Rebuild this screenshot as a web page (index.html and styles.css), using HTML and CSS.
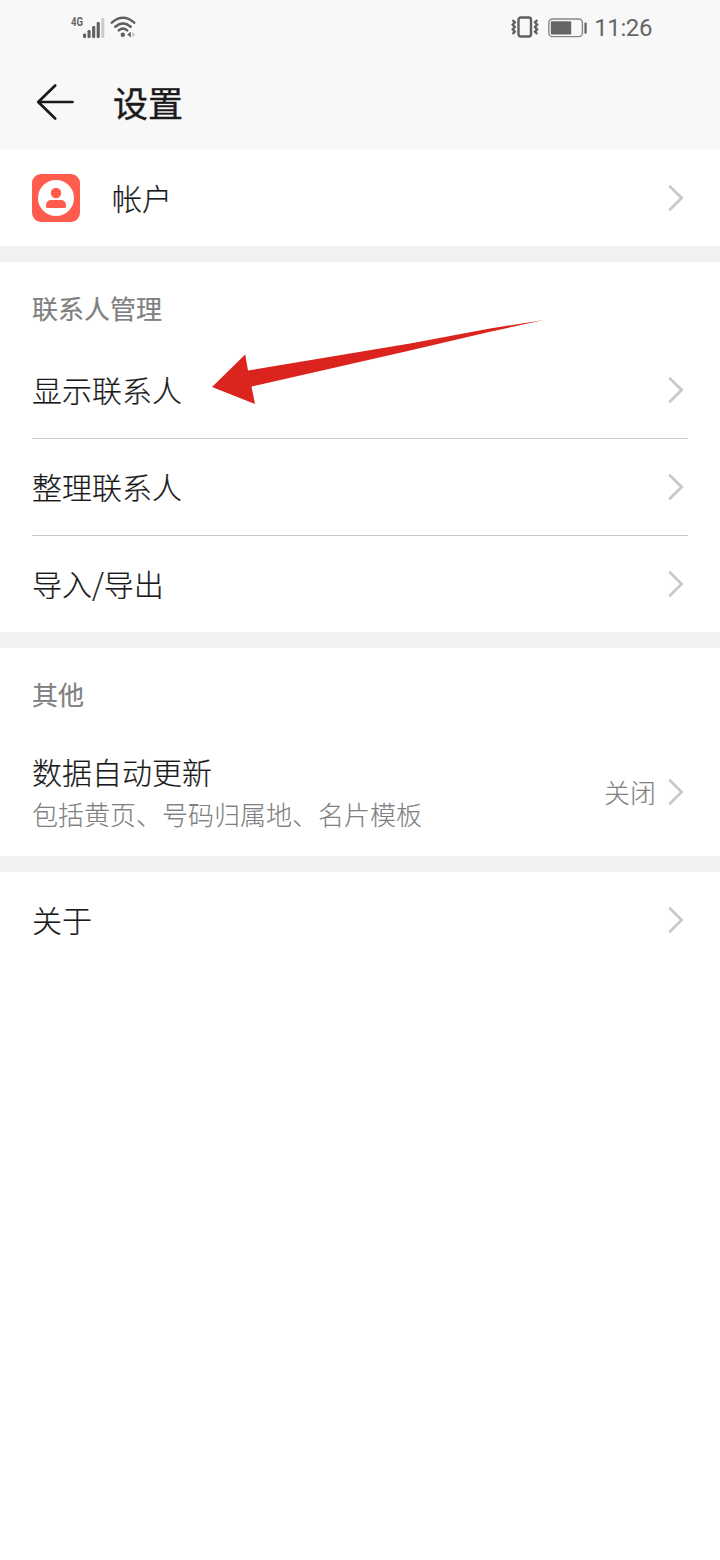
FILE: index.html
```html
<!DOCTYPE html>
<html lang="zh-CN">
<head>
<meta charset="utf-8">
<title>设置</title>
<link rel="stylesheet" href="styles.css">
</head>
<body>
<svg class="defs" width="0" height="0"><symbol id="chevron" viewBox="0 0 16 28"><path d="M2 2.5 13.7 14 2 25.5" fill="none" stroke="#c8c8c8" stroke-width="2.7" stroke-linecap="round"/></symbol></svg>
<header class="top">
  <div class="status">
    <div class="status-left">
      <span class="network">4G</span>
      <svg class="signal" width="22" height="22" viewBox="0 0 22 22"><g fill="#606060"><rect y="16.500" width="3.100" height="4.500" rx="1.2"/><rect x="4.5" y="13" width="3.100" height="8" rx="1.2"/><rect x="9.1" y="9" width="3.100" height="12" rx="1.2"/><rect x="13.7" y="5" width="3.100" height="16" rx="1.2"/></g><rect x="18.3" y="1" width="3" height="20" rx="1.2" fill="#ccc"/></svg>
      <svg class="wifi" width="26" height="22" viewBox="0 0 26 22"><g fill="none" stroke="#606060" stroke-width="2.5" stroke-linecap="round"><path d="M1.8 6.6Q13-3 24.2 6.6"/><path d="M5.3 10.7Q13 4 20.7 10.7"/><path d="M8.8 14.4Q13 10.8 17.2 14.4"/></g><circle cx="12.8" cy="18.7" r="2.2" fill="#606060"/><path d="M20.8 15.800v5.600l-3.600-2.800z" fill="#606060"/><path d="M22.200 15.800v5.600l3.200-2.800z" fill="#ccc"/></svg>
    </div>
    <div class="status-right">
      <svg class="vibrate" width="28" height="22" viewBox="0 0 28 22"><rect x="7.5" y="1.5" width="12.5" height="19" rx="2.2" fill="none" stroke="#606060" stroke-width="2.4"/><g fill="none" stroke="#606060" stroke-width="2.4"><path d="M1.5 4 3.8 6.3 1.7 8.7 3.8 11 1.7 13.4 3.8 15.8 1.5 18"/><path d="M26.3 4 24 6.3 26.1 8.7 24 11 26.1 13.4 24 15.8 26.3 18"/></g></svg>
      <svg class="battery" width="40" height="20" viewBox="0 0 40 20"><rect x=".8" y="1" width="33.6" height="17.6" rx="3.6" fill="none" stroke="#888" stroke-width="1.4"/><rect x="2.8" y="3.2" width="20.4" height="13.2" rx="1" fill="#666"/><rect x="36.4" y="4.4" width="2.3" height="11.4" rx="1" fill="#666"/></svg>
      <span class="clock">11:26</span>
    </div>
  </div>
  <div class="toolbar">
    <svg class="back" width="40" height="40" viewBox="0 0 40 40"><path d="M20.2 3.5 3.2 20 20.2 36.5M3.2 20H37.5" fill="none" stroke="#1a1a1a" stroke-width="2.7" stroke-linecap="round" stroke-linejoin="round"/></svg>
    <h1 class="title">设置</h1>
  </div>
</header>
<main>
  <section class="group">
    <div class="row">
      <svg class="avatar" width="48" height="48" viewBox="0 0 48 48"><rect width="48" height="48" rx="9" fill="#ff5c4d"/><circle cx="24" cy="24" r="18" fill="#fff"/><circle cx="24" cy="19" r="5.2" fill="#ff5c4d"/><path d="M14 32.500v-1.500a5 5 0 0 1 5-5h10a5 5 0 0 1 5 5v1.500a1.500 1.500 0 0 1-1.500 1.500h-17a1.500 1.500 0 0 1-1.500-1.500z" fill="#ff5c4d"/></svg>
      <span class="label">帐户</span><svg class="chevron"><use href="#chevron"/></svg>
    </div>
  </section>
  <section class="group">
    <h2 class="heading">联系人管理</h2>
    <div class="row with-pointer"><span class="label">显示联系人</span><svg class="chevron"><use href="#chevron"/></svg>
      <svg class="pointer" width="336" height="88" viewBox="0 0 336 88"><path d="M2 69 35.200 36.500 38 52.500 200 25.500 280 10.500 334 2 280 13.800 200 32.500 41.500 68.500 45 86Z" fill="#db241e"/></svg>
    </div>
    <div class="row divided"><span class="label">整理联系人</span><svg class="chevron"><use href="#chevron"/></svg></div>
    <div class="row divided"><span class="label">导入/导出</span><svg class="chevron"><use href="#chevron"/></svg></div>
  </section>
  <section class="group">
    <h2 class="heading">其他</h2>
    <div class="row tall"><div class="copy"><div class="label">数据自动更新</div><div class="note">包括黄页、号码归属地、名片模板</div></div><span class="value">关闭</span><svg class="chevron"><use href="#chevron"/></svg></div>
  </section>
  <section class="group">
    <div class="row"><span class="label">关于</span><svg class="chevron"><use href="#chevron"/></svg></div>
  </section>
</main>
</body>
</html>
```
FILE: styles.css
```css
* { box-sizing: border-box; }
body {
  margin: 0;
  min-height: 1560px;
  background: #fff;
  color: #1a1a1a;
  font-family: "Noto Sans CJK SC", sans-serif;
  font-weight: 300;
}
svg { display: block; flex: none; }
.defs { position: absolute; }
.top { height: 150px; background: #f8f8f8; }
.status {
  display: flex;
  justify-content: space-between;
  height: 56px;
  padding: 0 68px 0 71px;
  color: #666;
}
.status-left, .status-right { display: flex; align-items: flex-start; }
.network {
  width: 12px;
  padding-top: 16px;
  font: 700 12px/12px Roboto, sans-serif;
  transform: scaleX(0.8);
  transform-origin: left;
}
.signal { margin-top: 17px; }
.wifi { margin: 16px 0 0 5px; }
.vibrate { margin-top: 16px; }
.battery { margin: 18px 0 0 9px; }
.clock { margin-left: 6px; padding-top: 14px; font: 400 24px/28px Roboto, sans-serif; letter-spacing: -0.4px; }
.toolbar { display: flex; align-items: center; height: 92px; padding-left: 35px; }
.title { margin: 0 0 0 38px; font-size: 35px; line-height: 48px; font-weight: 400; -webkit-text-stroke: 0.4px currentColor; }
.group + .group { border-top: 16px solid #f1f1f1; }
.row { display: flex; align-items: center; height: 96px; margin: 0 32px; }
.divided { height: 97px; border-top: 1px solid #c8c8c8; }
.tall { height: 128px; }
.avatar { margin-right: 32px; }
.label { padding-bottom: 2px; font-size: 30px; line-height: 42px; -webkit-text-stroke: 0.2px currentColor; }
.heading { margin: 0; height: 80px; padding: 27px 32px 0; font-size: 26px; line-height: 38px; font-weight: 400; color: #808080; -webkit-text-stroke: 0.2px currentColor; }
.copy .label { margin-top: -1px; padding-bottom: 3px; }
.note { font-size: 26px; line-height: 38px; color: #808080; -webkit-text-stroke: 0.1px currentColor; }
.value { margin-left: auto; font-size: 26px; line-height: 38px; color: #808080; -webkit-text-stroke: 0.1px currentColor; }
.chevron { width: 16px; height: 28px; margin: 0 4px 0 auto; }
.value + .chevron { margin-left: 12px; }
.with-pointer { position: relative; }
.pointer { position: absolute; left: 178px; top: -24px; }
```
